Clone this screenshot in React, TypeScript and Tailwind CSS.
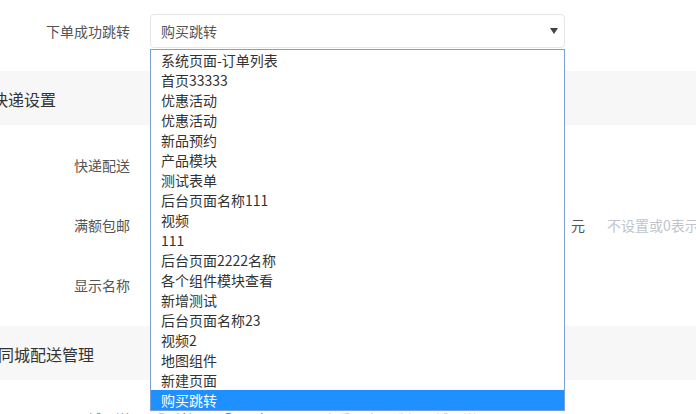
import React from 'react';

const pages = [
  '系统页面-订单列表',
  '首页33333',
  '优惠活动',
  '优惠活动',
  '新品预约',
  '产品模块',
  '测试表单',
  '后台页面名称111',
  '视频',
  '111',
  '后台页面2222名称',
  '各个组件模块查看',
  '新增测试',
  '后台页面名称23',
  '视频2',
  '地图组件',
  '新建页面',
  '购买跳转',
];

const Row: React.FC<{ label: string; children?: React.ReactNode }> = ({ label, children }) => (
  <div className="flex h-[60px] items-center">
    <div className="w-[130px] shrink-0 text-right text-[14px] text-[#555]">{label}</div>
    <div className="ml-[20px] flex min-w-0 flex-1 items-center">{children}</div>
  </div>
);

const SectionTitle: React.FC<{ title: string; offset: string }> = ({ title, offset }) => (
  <div className="mb-[10px] mt-[11px] flex h-[54px] items-center bg-[#f7f7f7] pt-[1px]">
    <span className={`text-[16px] text-[#333] ${offset}`}>{title}</span>
  </div>
);

const Radio: React.FC<{ checked?: boolean; label: string }> = ({ checked, label }) => (
  <label className="mr-[20px] flex items-center gap-[6px] text-[14px] text-[#555]">
    {checked ? (
      <span className="flex h-[13px] w-[13px] items-center justify-center rounded-full bg-[#2d8cf0]">
        <span className="h-[5px] w-[5px] rounded-full bg-white" />
      </span>
    ) : (
      <span className="h-[13px] w-[13px] rounded-full border border-[#b5b5b5] bg-white" />
    )}
    {label}
  </label>
);

export default function App() {
  const selected = '购买跳转';
  return (
    <div
      className="relative h-[414px] w-[696px] overflow-hidden bg-white"
      style={{ fontFamily: '"Noto Sans CJK SC", "Microsoft YaHei", sans-serif' }}
    >
      <div className="flex h-[60px] items-center pt-[2px]">
        <div className="w-[130px] shrink-0 text-right text-[14px] text-[#555]">下单成功跳转</div>
        <div className="relative ml-[20px] flex h-[34px] w-[415px] items-center justify-between rounded-[4px] border border-[#e4e6e9] pl-[10px] pr-[6px] text-[14px] text-[#555]">
          <span>{selected}</span>
          <svg width="8" height="6" viewBox="0 0 8 6">
            <path d="M0 0h8L4 6z" fill="#444" />
          </svg>
        </div>
      </div>

      <SectionTitle title="快递设置" offset="-ml-[8px]" />

      <Row label="快递配送">
        <Radio label="关闭" />
        <Radio checked label="开启" />
      </Row>
      <Row label="满额包邮">
        <div className="h-[34px] w-[415px] shrink-0 rounded-[4px] border border-[#e4e6e9]" />
        <span className="ml-[6px] shrink-0 text-[14px] text-[#555]">元</span>
        <span className="ml-[22px] shrink-0 whitespace-nowrap text-[14px] text-[#c0c4cc]">不设置或0表示不包邮</span>
      </Row>
      <Row label="显示名称">
        <div className="h-[34px] w-[415px] shrink-0 rounded-[4px] border border-[#e4e6e9]" />
      </Row>

      <SectionTitle title="同城配送管理" offset="-ml-[2px]" />

      <div className="-mt-[1px]">
        <Row label="同城配送">
          <div className="ml-[5px] flex items-center">
            <Radio label="关闭" />
            <Radio checked label="开启" />
            <span className="ml-[20px] whitespace-nowrap text-[14px] text-[#c0c4cc]">开启后买家可选择同城配送</span>
          </div>
        </Row>
      </div>

      {/* open native-style option list */}
      <div className="absolute left-[150px] top-[49px] w-[415px] border border-[#7b9ed8] bg-white text-[14px] text-[#333]">
        {pages.map((p, i) => (
          <div
            key={i}
            className={`flex h-[20px] items-center pl-[10px] leading-[20px] ${
              i === pages.length - 1 ? 'bg-[#1e90ff] text-white' : ''
            }`}
          >
            {p}
          </div>
        ))}
      </div>
    </div>
  );
}
